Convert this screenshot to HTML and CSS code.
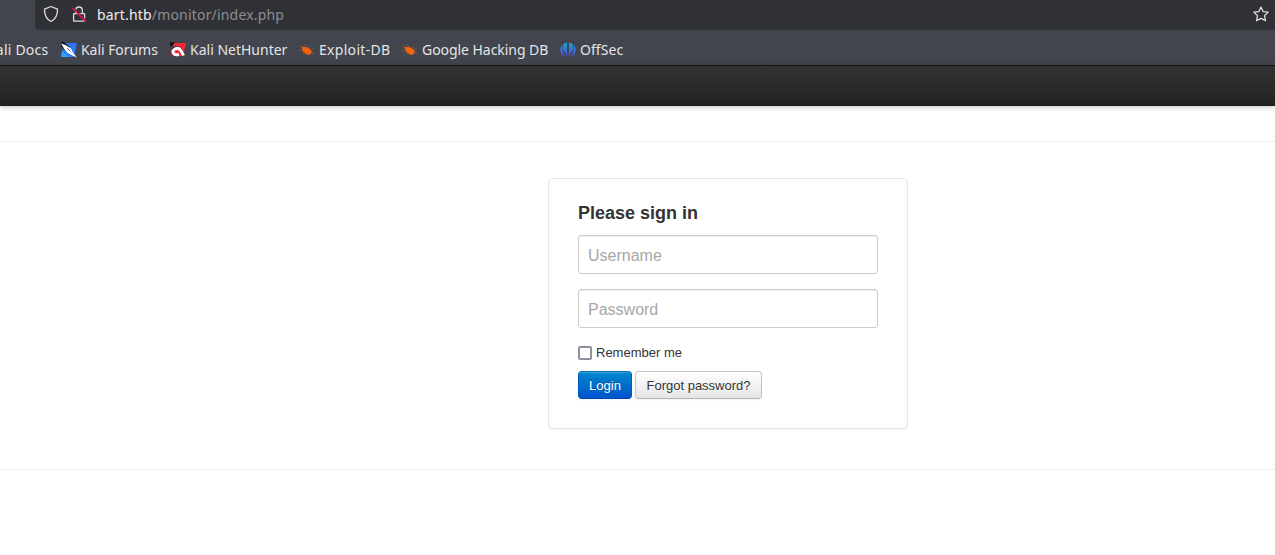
FILE: index.html
```html
<!DOCTYPE html>
<html lang="en">
<head>
<meta charset="utf-8">
<title>Please sign in</title>
<link rel="stylesheet" href="styles.css">
</head>
<body>
<header class="browser">
  <div class="toolbar">
    <div class="address">
      <svg class="shield" width="16" height="18" viewBox="0 0 16 18"><path d="M8 1.500 14.500 4.100C14.700 10 13 14.200 8 16.500 3 14.200 1.300 10 1.500 4.100Z"/></svg>
      <svg class="lock" width="16" height="18" viewBox="0 0 16 18"><path d="M4.700 8V5.300a3.300 3.300 0 0 1 6.600 0V8M3.200 8.700h9.800q.6 0 .6.600v6.200q0 .6-.6.600H3.200q-.6 0-.6-.6V9.300q0-.6.6-.6Z"/><path class="slash-gap" d="m2.500 2.200 13 13"/><path class="slash" d="m1.500 3 13 13.200"/></svg>
      <div class="url"><span class="host">bart.htb</span>/monitor/index.php</div>
      <svg class="star" width="18" height="18" viewBox="0 0 18 18"><path d="m9 2.100 2.100 4.500 5 .6-3.600 3.400 1 5L9 13.300l-4.500 2.300 1-5L1.900 7.200l5-.6Z"/></svg>
    </div>
  </div>
  <nav class="bookmarks">
    <a class="bookmark docs">Kali Docs</a>
    <a class="bookmark forums"><svg width="16" height="16" viewBox="0 0 16 16"><path fill="#2878f8" d="M3 1h13l-3 14H0z"/><path fill="#2fa0fb" d="M1 9 0 15h9z"/><path fill="#17191e" d="M0 0h3l6 5-6 3-3-4z"/><path fill="#fff" d="M0 1.500 4.500 3 10 6.500l2.300 4.500 3.700 4.500-5.500-2.500-4-2L3 6.500z"/><path stroke="#444" stroke-width=".8" d="m6 6 3.500 3.500"/></svg>Kali Forums</a>
    <a class="bookmark hunter"><svg width="16" height="16" viewBox="0 0 16 16"><path fill="#ee2935" d="M4 1h12l-3 13H2z"/><path fill="#17191e" d="M0 0h5L3 3 0 5z"/><path fill="#a51935" d="M0 9h4l3 5H1z"/><path fill="none" stroke="#17191e" stroke-width="1" d="M1.500 7.500Q6 2.500 10.500 6L14 11"/><path fill="none" stroke="#fff" stroke-width="3" d="M9 12.500C3 14 1 9 5 7s6 1 8.500 6.500"/></svg>Kali NetHunter</a>
    <a class="bookmark exploit"><svg width="16" height="16" viewBox="0 0 16 16"><path class="bug" d="M2.500 5.500Q2 3.800 5 5l3 .3 3 1.700 1.700 2-.7 3-3 1-3-1.500-2-2z"/><path class="legs" d="m0 3 4 3M5 2l3 4M10 4l1 3M0 8l4 1M3 12l4-2M12 8l3-2M12 10l3 1"/></svg>Exploit-DB</a>
    <a class="bookmark google"><svg width="16" height="16" viewBox="0 0 16 16"><path class="bug" d="M2.500 5.500Q2 3.800 5 5l3 .3 3 1.700 1.700 2-.7 3-3 1-3-1.500-2-2z"/><path class="legs" d="m0 3 4 3M5 2l3 4M10 4l1 3M0 8l4 1M3 12l4-2M12 8l3-2M12 10l3 1"/></svg>Google Hacking DB</a>
    <a class="bookmark offsec"><svg width="16" height="16" viewBox="0 0 16 16"><defs><linearGradient id="off" x2="0" y2="1"><stop stop-color="#16a6cf"/><stop offset="1" stop-color="#5543ed"/></linearGradient></defs><path fill="url(#off)" d="M7 .5V15H6.300L5.500 11 3.200 8V2.200Q5 .7 7 .5M9 .5q2 .2 3.800 1.700V8l-2.300 3-.8 4H9zM2.400 3V9l1.600 3v2Q0 12 .2 7 .5 4.500 2.400 3M13.600 3V9L12 12v2q4-2 3.800-7-.3-2.500-2.200-4"/></svg>OffSec</a>
  </nav>
</header>
<div class="navbar"></div>
<main class="content">
  <form class="signin">
    <h1>Please sign in</h1>
    <input class="field" type="text" placeholder="Username" aria-label="Username">
    <input class="field" type="password" placeholder="Password" aria-label="Password">
    <label class="remember"><input class="check" type="checkbox"><span>Remember me</span></label>
    <div class="actions"><button class="button primary" type="button">Login</button><button class="button" type="button">Forgot password?</button></div>
  </form>
</main>
</body>
</html>
```
FILE: styles.css
```css
* { box-sizing: border-box; }
body { margin: 0; height: 555px; overflow: hidden; background: #fff; color: #333; font: 13px/20px "Liberation Sans", Arial, sans-serif; }
.browser { height: 65px; background: #42454d; color: #e4e4e5; font: 14px/20px "Noto Sans", sans-serif; }
.toolbar { height: 30px; padding-left: 35px; }
.address { display: flex; height: 30px; padding: 5px 5px 0 8px; background: #303136; border-radius: 0 0 0 4px; }
.address svg { flex: none; fill: none; stroke: #dedee0; stroke-width: 1.3; stroke-linejoin: round; }
.lock { margin-left: 12px; }
.address .slash-gap { stroke: #303136; stroke-width: 1; }
.address .slash { stroke: #e8104c; stroke-width: 1.7; }
.url { flex: 1; margin-left: 10px; color: #8d8e92; letter-spacing: .18px; }
.host { color: #eeeeef; }
.bookmarks { display: flex; height: 35px; padding-top: 10px; white-space: nowrap; }
.bookmark { display: flex; flex: none; gap: 4px; height: 20px; }
.bookmark svg { flex: none; margin-top: 2px; }
.docs { width: 61px; margin-left: -13px; margin-right: 13px; letter-spacing: .2px; }
.forums { width: 109px; letter-spacing: -.05px; }
.hunter { width: 129px; }
.exploit { width: 103px; letter-spacing: .3px; }
.google { width: 158px; letter-spacing: -.05px; }
.offsec { letter-spacing: .05px; }
.bug { fill: #f2640d; }
.legs { fill: none; stroke: #a75427; stroke-width: .7; }
.navbar { height: 41px; border-top: 1px solid #121315; background: linear-gradient(#333, #222); border-bottom: 1px solid #1d1d1d; box-shadow: 0 1px 5px rgba(0,0,0,.25); }
.content { height: 329px; margin-top: 35px; padding-top: 36px; border-top: 1px solid #eee; border-bottom: 1px solid #eee; }
.signin { width: 360px; height: 251px; margin-left: 548px; padding: 19px 29px 29px; border: 1px solid #e5e5e5; border-radius: 5px; box-shadow: 0 1px 2px rgba(0,0,0,.05); }
h1 { margin: 0 0 7px; font-size: 18px; line-height: 30px; }
.field { display: block; width: 300px; height: 39px; margin: 0 0 15px; padding: 8px 9px 6px; border: 1px solid #ccc; border-radius: 3px; background: #fff; box-shadow: inset 0 1px 1px rgba(0,0,0,.075); font: 16px "Liberation Sans", Arial, sans-serif; }
.field::placeholder { color: #a6a6a6; opacity: 1; }
.remember { display: flex; align-items: center; gap: 4px; height: 20px; }
.check { appearance: none; width: 14px; height: 14px; margin: 0; border: 2px solid #8f8f9d; border-radius: 2px; background: #fff; }
.actions { display: flex; gap: 3px; margin-top: 8px; }
.button { width: 127px; height: 28px; padding: 2px 0 0; border: 1px solid #c5c5c5; border-bottom-color: #b3b3b3; border-radius: 4px; background: linear-gradient(#fff, #e6e6e6); box-shadow: inset 0 1px 0 rgba(255,255,255,.2), 0 1px 2px rgba(0,0,0,.05); color: #333; font: 13px/20px "Liberation Sans", Arial, sans-serif; text-shadow: 0 1px 1px rgba(255,255,255,.75); }
.primary { width: 54px; border-color: #0074bd #0057bd #0049a8; background: linear-gradient(#08c, #05c); color: #fff; text-shadow: 0 -1px 0 rgba(0,0,0,.25); }
```
